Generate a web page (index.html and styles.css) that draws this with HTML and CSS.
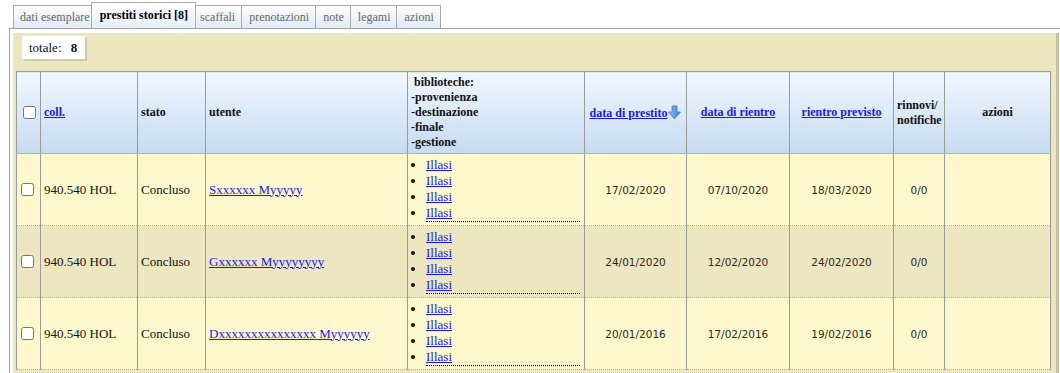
FILE: index.html
```html
<!DOCTYPE html>
<html lang="it">

<head>
    <meta charset="UTF-8">
    <meta name="viewport" content="width=device-width, initial-scale=1.0">
    <title>Prestiti storici</title>
    <link rel="stylesheet" href="styles.css">
</head>

<body>
    <nav class="tabs">
        <a class="tab">dati esemplare</a>
        <a class="tab active">prestiti storici [8]</a>
        <a class="tab">scaffali</a>
        <a class="tab">prenotazioni</a>
        <a class="tab">note</a>
        <a class="tab">legami</a>
        <a class="tab">azioni</a>
    </nav>

    <section class="panel">
        <div class="box">
            <div class="totale">totale: <b>8</b></div>

            <table class="loans">
                <colgroup>
                    <col style="width: 24px">
                    <col style="width: 97px">
                    <col style="width: 68px">
                    <col style="width: 202px">
                    <col style="width: 177px">
                    <col style="width: 102px">
                    <col style="width: 103px">
                    <col style="width: 104px">
                    <col style="width: 51px">
                    <col style="width: 106px">
                </colgroup>
                <thead>
                    <tr>
                        <th class="chk"><input type="checkbox"></th>
                        <th class="left"><a href="#">coll.</a></th>
                        <th class="left">stato</th>
                        <th class="left">utente</th>
                        <th class="left libs">&nbsp;biblioteche:<br>-provenienza<br>-destinazione<br>-finale<br>-gestione</th>
                        <th><a href="#">data di prestito</a><svg class="sort" width="13" height="15" viewBox="0 0 13 15">
                                <defs>
                                    <linearGradient id="ag" x1="0" y1="0" x2="1" y2="0">
                                        <stop offset="0" stop-color="#8cc0f0" />
                                        <stop offset="1" stop-color="#3f7fc8" />
                                    </linearGradient>
                                </defs>
                                <path d="M4 1h5v6h3.5L6.5 14 0.5 7H4z" fill="url(#ag)" stroke="#4a82c0" stroke-width="0.8" />
                            </svg></th>
                        <th><a href="#">data di rientro</a></th>
                        <th><a href="#">rientro previsto</a></th>
                        <th class="left">rinnovi/<br>notifiche</th>
                        <th>azioni</th>
                    </tr>
                </thead>
                <tbody>
                    <tr class="odd">
                        <td class="chk"><input type="checkbox"></td>
                        <td>940.540 HOL</td>
                        <td>Concluso</td>
                        <td><a href="#">Sxxxxxx Myyyyy</a></td>
                        <td class="libs">
                            <ul>
                                <li><a href="#">Illasi</a></li>
                                <li><a href="#">Illasi</a></li>
                                <li><a href="#">Illasi</a></li>
                                <li><a href="#">Illasi</a></li>
                            </ul>
                        </td>
                        <td class="num">17/02/2020</td>
                        <td class="num">07/10/2020</td>
                        <td class="num">18/03/2020</td>
                        <td class="num">0/0</td>
                        <td></td>
                    </tr>
                    <tr class="even">
                        <td class="chk"><input type="checkbox"></td>
                        <td>940.540 HOL</td>
                        <td>Concluso</td>
                        <td><a href="#">Gxxxxxx Myyyyyyyy</a></td>
                        <td class="libs">
                            <ul>
                                <li><a href="#">Illasi</a></li>
                                <li><a href="#">Illasi</a></li>
                                <li><a href="#">Illasi</a></li>
                                <li><a href="#">Illasi</a></li>
                            </ul>
                        </td>
                        <td class="num">24/01/2020</td>
                        <td class="num">12/02/2020</td>
                        <td class="num">24/02/2020</td>
                        <td class="num">0/0</td>
                        <td></td>
                    </tr>
                    <tr class="odd">
                        <td class="chk"><input type="checkbox"></td>
                        <td>940.540 HOL</td>
                        <td>Concluso</td>
                        <td><a href="#">Dxxxxxxxxxxxxxxx Myyyyyy</a></td>
                        <td class="libs">
                            <ul>
                                <li><a href="#">Illasi</a></li>
                                <li><a href="#">Illasi</a></li>
                                <li><a href="#">Illasi</a></li>
                                <li><a href="#">Illasi</a></li>
                            </ul>
                        </td>
                        <td class="num">20/01/2016</td>
                        <td class="num">17/02/2016</td>
                        <td class="num">19/02/2016</td>
                        <td class="num">0/0</td>
                        <td></td>
                    </tr>
                </tbody>
            </table>
        </div>
    </section>
</body>

</html>
```

FILE: styles.css
```css
body {
    margin: 2px 0 0 9px;
    font-family: "Liberation Serif", serif;
    font-size: 13px;
    color: #111;
    overflow: hidden;
}

.tabs {
    display: flex;
    align-items: flex-end;
    margin-left: 5px;
    height: 26px;
}

.tab {
    height: 22px;
    line-height: 22px;
    padding: 0 6px 0 7px;
    border: 1px solid #aaa;
    border-bottom: none;
    margin-left: -1px;
    font-size: 12px;
    color: #666;
    background: linear-gradient(#fdfeff, #dfeaf6);
}

.tab:first-child {
    padding: 0 5px 0 6px;
}

.tab.active {
    position: relative;
    height: 25px;
    line-height: 24px;
    margin: 0 -3px 0 -5px;
    padding: 0 7px 0 8px;
    color: #000;
    font-weight: bold;
    background: linear-gradient(#ffffff, #e4eefa);
}

.panel {
    border-top: 1px solid #a2a2a2;
    border-left: 1px solid #a2a2a2;
    padding: 4px 4px 0 3px;
}

.box {
    background-color: #ece6bf;
    box-shadow: 3px 0 0 #c9c29c;
    padding: 3px 3px 0 3px;
    height: 400px;
}

.totale {
    display: inline-block;
    background-color: white;
    padding: 4px 8px 4px 7px;
    margin-left: 6px;
    margin-bottom: 12px;
    line-height: 15px;
    box-shadow: 2px 2px 0 #cfc9a9;
}

.totale b {
    margin-left: 6px;
}

.loans {
    table-layout: fixed;
    width: 1035px;
    border-collapse: collapse;
}

.loans th,
.loans td {
    border-left: 1px solid #9a9a9a;
    border-right: 1px solid #9a9a9a;
    padding: 3px 3px;
    vertical-align: middle;
}

.loans th {
    font-size: 12px;
    line-height: 15px;
    text-align: center;
    padding: 3px 3px 3px 3px;
    background: linear-gradient(#f1f7ff, #c6dbf1);
    border-top: 1px solid #9a9a9a;
    border-bottom: 1px solid #b0b0b0;
}

.loans th.left {
    text-align: left;
}

.loans a {
    color: #1a1aee;
}

.sort {
    vertical-align: -3px;
    margin-left: 1px;
}

.loans td {
    border-bottom: 1px dotted #8db4e4;
}

.loans .chk {
    padding: 0;
}

.loans .chk input {
    margin: 3px 3px 3px 4px;
    vertical-align: middle;
}

.odd td {
    background-color: #fef8cd;
}

.even td {
    background-color: #ece6c1;
}

td.num {
    text-align: center;
    font-family: "DejaVu Sans", sans-serif;
    font-size: 10.5px;
    color: #2e2a1a;
}

.loans td.libs {
    padding: 3px 4px 3px 3px;
}

td.libs ul {
    margin: 0;
    padding-left: 15px;
    line-height: 16px;
}

td.libs li:last-child {
    border-bottom: 1px dotted #000;
}
```
